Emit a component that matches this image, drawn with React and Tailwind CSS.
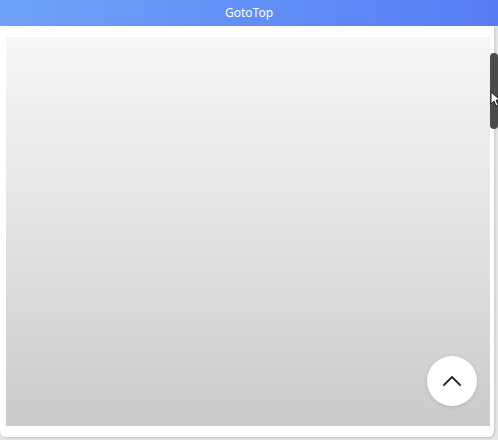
import { ChevronUp } from "lucide-react";

const App = () => {
  return (
    <div className="w-[498px] h-[440px] bg-[#e6e6e6] overflow-hidden font-['Noto_Sans',sans-serif]">
      <div className="h-[26px] bg-gradient-to-r from-[#6ea2f9] to-[#587cf5] flex items-center justify-center">
        <span className="text-white text-[12px] leading-none">GotoTop</span>
      </div>

      <div className="relative h-[411px] w-[494px] bg-white rounded-b-md shadow-[1px_1px_3px_rgba(0,0,0,0.15)] pt-[11px] pl-[6px] pr-[4px]">
        <div className="h-[389px] w-[484px] bg-gradient-to-b from-[#f6f6f5] via-[#e2e2e5] to-[#cacaca]" />

        {/* scrollbar */}
        <div className="absolute left-[490px] top-[27px] w-[8px] h-[76px] rounded-full bg-[#4b4b4b]" />

        {/* cursor */}
        <svg
          className="absolute left-[490px] top-[65px]"
          width="10"
          height="16"
          viewBox="0 0 10 16"
        >
          <path
            d="M1 1 L1 13 L4 10 L6 15 L8 14 L6 9 L10 9 Z"
            fill="#fff"
            stroke="#222"
            strokeWidth="1"
          />
        </svg>

        <button className="absolute left-[427px] top-[330px] w-[50px] h-[50px] rounded-full bg-white shadow-[0_1px_4px_rgba(0,0,0,0.12)] flex items-center justify-center">
          <ChevronUp size={32} strokeWidth={1.4} className="text-[#2b2b2b]" />
        </button>
      </div>
    </div>
  );
};

export default App;
